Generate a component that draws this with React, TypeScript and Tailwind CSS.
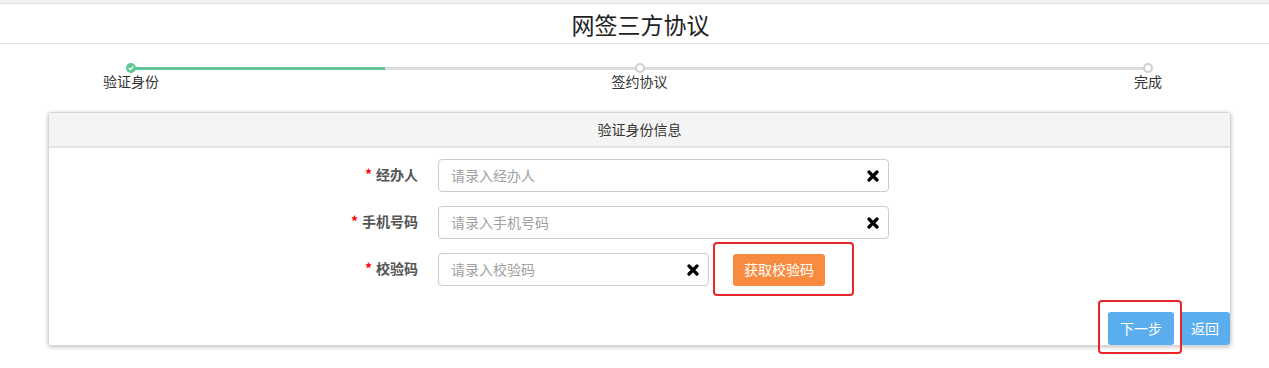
import React from 'react';

const FONT = { fontFamily: '"Noto Sans CJK SC", "Noto Sans", sans-serif' };

const STEPS = ['验证身份', '签约协议', '完成'];

const FIELDS = [
  { label: '经办人', placeholder: '请录入经办人' },
  { label: '手机号码', placeholder: '请录入手机号码' },
];

function ClearIcon() {
  return (
    <svg width="12" height="12" viewBox="0 0 12 12" className="shrink-0">
      <path d="M2 2 L10 10 M10 2 L2 10" stroke="#000" strokeWidth="3.2" strokeLinecap="round" />
    </svg>
  );
}

function Field({ label, placeholder, width }: { label: string; placeholder: string; width: string }) {
  return (
    <div className="flex items-center">
      <div className="w-[369px] text-right text-[14px] font-bold text-[#555] leading-[20px] -mt-[4px]">
        <span className="text-[#f00] mr-[4px]">*</span>
        {label}
      </div>
      <div
        className={`ml-[20px] ${width} h-[33px] border border-[#ccc] rounded-[4px] bg-white flex items-center justify-between pl-[12px] pr-[9px]`}
      >
        <span className="text-[14px] text-[#a0a0a0]">{placeholder}</span>
        <ClearIcon />
      </div>
    </div>
  );
}

export default function App() {
  return (
    <div className="w-[1269px] h-[368px] bg-white overflow-hidden text-[#333]" style={FONT}>
      <div className="h-[4px] bg-[#f1f1f1] border-b border-[#dedede]" />

      {/* 标题 */}
      <div className="h-[40px] border-b border-[#e2e2e2] flex items-center justify-center">
        <h1 className="text-[23px] text-[#222] leading-none ml-[12px] mt-[2px]">网签三方协议</h1>
      </div>

      {/* 步骤条 */}
      <div className="relative ml-[131px] w-[1017px] mt-[19px] h-[34px]">
        <div className="absolute left-0 right-0 top-[4px] h-[3px] bg-[#dcdcdc]" />
        <div className="absolute left-0 w-1/4 top-[4px] h-[3px] bg-[#5fc896]" />
        <div className="relative flex justify-between">
          {STEPS.map((s, i) => (
            <div key={s} className="w-0 flex flex-col items-center">
              {i === 0 ? (
                <div className="w-[10px] h-[10px] rounded-full bg-[#5fc896] flex items-center justify-center shrink-0">
                  <svg width="6" height="6" viewBox="0 0 6 6">
                    <path d="M0.8 3 L2.5 4.6 L5.3 1.4" stroke="#fff" strokeWidth="1.4" fill="none" />
                  </svg>
                </div>
              ) : (
                <div className="w-[10px] h-[10px] rounded-full bg-white border-2 border-[#cfcfcf] shrink-0" />
              )}
              <span className="mt-0 text-[14px] text-[#333] whitespace-nowrap leading-[16px]">{s}</span>
            </div>
          ))}
        </div>
      </div>

      {/* 面板 */}
      <div className="ml-[48px] mt-[15px] w-[1183px] border border-[#d6d6d6] rounded-[3px] shadow-[0_1px_4px_rgba(0,0,0,0.25)]">
        <div className="h-[35px] bg-[#f4f4f4] border-b-2 border-[#e2e2e2] flex items-center justify-center text-[14px] text-[#333]">
          验证身份信息
        </div>

        <div className="pt-[11px] flex flex-col gap-[14px]">
          {FIELDS.map((f) => (
            <Field key={f.label} label={f.label} placeholder={f.placeholder} width="w-[451px]" />
          ))}
          <div className="flex items-center">
            <Field label="校验码" placeholder="请录入校验码" width="w-[271px]" />
            <div className="relative ml-[24px]">
              <button className="w-[92px] h-[32px] rounded-[3px] bg-[#f98b40] text-white text-[14px]">
                获取校验码
              </button>
              <div className="absolute -left-[20px] -top-[12px] w-[141px] h-[54px] border-2 border-[#e8262a] rounded-[4px] pointer-events-none" />
            </div>
          </div>
        </div>

        <div className="mt-[26px] flex justify-end gap-[6px]">
          <div className="relative">
            <button className="w-[66px] h-[33px] rounded-[3px] bg-[#5aaeee] text-white text-[14px]">下一步</button>
            <div className="absolute -left-[10px] -top-[12px] w-[84px] h-[54px] border-2 border-[#e8262a] rounded-[4px] pointer-events-none" />
          </div>
          <button className="w-[50px] h-[33px] rounded-[3px] bg-[#5aaeee] text-white text-[14px]">返回</button>
        </div>
      </div>
    </div>
  );
}
